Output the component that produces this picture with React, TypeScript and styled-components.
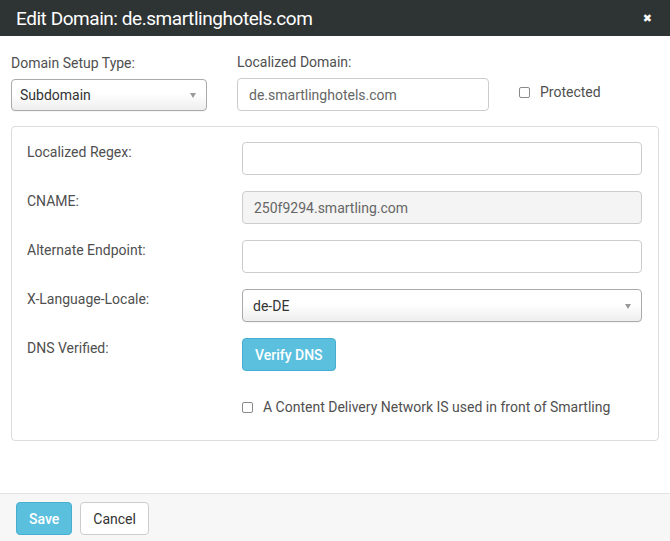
import React from "react";
import styled, { createGlobalStyle } from "styled-components";

const Global = createGlobalStyle`
  html, body { margin: 0; padding: 0; background: #fff; }
  body { font-family: Roboto, "Liberation Sans", sans-serif; color: #4f4f4f; }
  * { box-sizing: border-box; }
`;

const Modal = styled.div`
  width: 670px;
  height: 541px;
  display: flex;
  flex-direction: column;
  background: #fff;
`;

const Header = styled.header`
  height: 36px;
  background: #2e3334;
  display: flex;
  align-items: center;
  justify-content: space-between;
  padding: 0 18px 0 16px;
`;

const Title = styled.h1`
  margin: 0;
  font-size: 19px;
  font-weight: 400;
  color: #fff;
  letter-spacing: -0.45px;
`;

const Close = styled.span`
  color: #fff;
  font-family: "DejaVu Sans", sans-serif;
  font-size: 11px;
  line-height: 1;
`;

const Body = styled.main`
  flex: 1;
  padding: 16px 11px 0;
`;

const TopRow = styled.div`
  display: grid;
  grid-template-columns: 196px 252px auto;
  column-gap: 30px;
  align-items: end;
`;

const Field = styled.div`
  display: flex;
  flex-direction: column;
  gap: 6px;
`;

const Label = styled.label`
  font-size: 14px;
  line-height: 20px;
  color: #4f4f4f;
`;

const SelectBox = styled.div<{ $h?: number; $pad?: number }>`
  position: relative;
  height: ${(p) => p.$h ?? 32}px;
  border: 1px solid #aaa;
  border-radius: 4px;
  background: linear-gradient(#ffffff 0%, #ffffff 45%, #eeeeee 100%);
  display: flex;
  align-items: center;
  padding-left: ${(p) => p.$pad ?? 8}px;
  font-size: 14px;
  color: #333;
  box-shadow: 0 1px 0 rgba(0, 0, 0, 0.04);
`;

const Arrow = styled.span`
  position: absolute;
  right: 10px;
  top: 50%;
  margin-top: -2px;
  width: 0;
  height: 0;
  border-left: 3.5px solid transparent;
  border-right: 3.5px solid transparent;
  border-top: 5px solid #999;
`;

const TextBox = styled.div<{ $readonly?: boolean }>`
  height: 33px;
  border: 1px solid #ccc;
  border-radius: 4px;
  background: ${(p) => (p.$readonly ? "#f4f4f4" : "#fff")};
  display: flex;
  align-items: center;
  padding-left: 11px;
  font-size: 14px;
  color: #666;
`;

const CheckRow = styled.label`
  display: flex;
  align-items: center;
  gap: 10px;
  font-size: 14px;
  color: #4f4f4f;
  line-height: 20px;
`;

const Check = styled.span`
  width: 11px;
  height: 11px;
  border: 1px solid #8a8a8a;
  border-radius: 2px;
  background: #fff;
  flex: none;
`;

const ProtectedWrap = styled.div`
  padding-bottom: 9px;
`;

const Panel = styled.section`
  margin-top: 15px;
  border: 1px solid #dcdcdc;
  border-radius: 4px;
  padding: 15px 16px 23px 15px;
  display: flex;
  flex-direction: column;
  gap: 16px;
`;

const FormRow = styled.div`
  display: grid;
  grid-template-columns: 215px 400px;
  align-items: start;
`;

const CdnRow = styled.div`
  display: grid;
  grid-template-columns: 215px 400px;
  margin-top: 10px;
`;

const Button = styled.button<{ $primary?: boolean }>`
  height: 33px;
  padding: 0 12px;
  border-radius: 4px;
  font-family: Roboto, "Liberation Sans", sans-serif;
  font-size: 14px;
  white-space: nowrap;
  cursor: pointer;
  border: 1px solid ${(p) => (p.$primary ? "#46aed0" : "#ccc")};
  background: ${(p) => (p.$primary ? "#5bc0de" : "#fff")};
  color: ${(p) => (p.$primary ? "#fff" : "#333")};
  font-weight: ${(p) => (p.$primary ? 500 : 400)};
`;

const VerifyButton = styled(Button)`
  justify-self: start;
  padding: 0 12px;
`;

const Footer = styled.footer`
  height: 48px;
  border-top: 1px solid #e3e3e3;
  background: #f7f7f7;
  display: flex;
  align-items: flex-start;
  padding: 8px 16px 0;
  gap: 8px;
`;

const rows: { label: string; value?: string; readonly?: boolean }[] = [
  { label: "Localized Regex:" },
  { label: "CNAME:", value: "250f9294.smartling.com", readonly: true },
  { label: "Alternate Endpoint:" },
];

export default function App() {
  return (
    <>
      <Global />
      <Modal>
        <Header>
          <Title>Edit Domain: de.smartlinghotels.com</Title>
          <Close>✖</Close>
        </Header>
        <Body>
          <TopRow>
            <Field>
              <Label>Domain Setup Type:</Label>
              <SelectBox>
                Subdomain
                <Arrow />
              </SelectBox>
            </Field>
            <Field>
              <Label>Localized Domain:</Label>
              <TextBox>de.smartlinghotels.com</TextBox>
            </Field>
            <ProtectedWrap>
              <CheckRow>
                <Check />
                Protected
              </CheckRow>
            </ProtectedWrap>
          </TopRow>
          <Panel>
            {rows.map((r) => (
              <FormRow key={r.label}>
                <Label>{r.label}</Label>
                <TextBox $readonly={r.readonly}>{r.value}</TextBox>
              </FormRow>
            ))}
            <FormRow>
              <Label>X-Language-Locale:</Label>
              <SelectBox $h={33} $pad={10}>
                de-DE
                <Arrow />
              </SelectBox>
            </FormRow>
            <FormRow>
              <Label>DNS Verified:</Label>
              <VerifyButton $primary>Verify DNS</VerifyButton>
            </FormRow>
            <CdnRow>
              <span />
              <CheckRow>
                <Check />
                A Content Delivery Network IS used in front of Smartling
              </CheckRow>
            </CdnRow>
          </Panel>
        </Body>
        <Footer>
          <Button $primary>Save</Button>
          <Button>Cancel</Button>
        </Footer>
      </Modal>
    </>
  );
}
